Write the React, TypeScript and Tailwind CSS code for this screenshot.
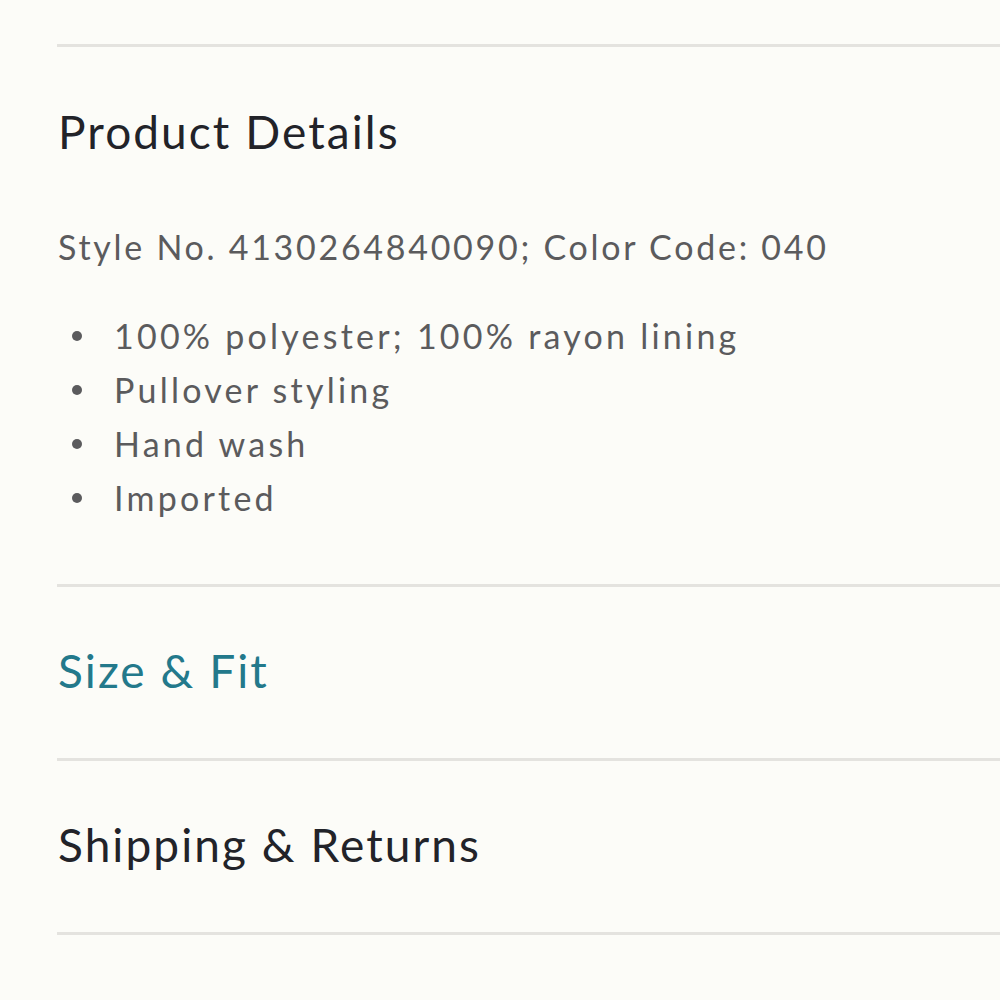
const bullets = [
  "100% polyester; 100% rayon lining",
  "Pullover styling",
  "Hand wash",
  "Imported",
];

function SectionTitle({ label, active }: { label: string; active?: boolean }) {
  return (
    <h2
      className={`text-[46px] leading-[50px] tracking-[0.045em] ${
        active ? "text-[#23798b]" : "text-[#222329]"
      }`}
    >
      {label}
    </h2>
  );
}

export default function App() {
  return (
    <div
      className="min-h-[1000px] w-full bg-[#fcfcf8] pt-[44px] pl-[57px]"
      style={{ fontFamily: "Lato, 'Noto Sans', sans-serif" }}
    >
      <div className="border-t-[3px] border-[#e4e3df] pt-[60px] pb-[59px] pl-px">
        <SectionTitle label="Product Details" />
        <p className="mt-[63px] text-[34px] leading-[54px] tracking-[0.08em] text-[#5b5b5d]">
          Style No. 4130264840090; Color Code: 040
        </p>
        <ul className="mt-[35px]">
          {bullets.map((b) => (
            <li key={b} className="flex items-center text-[34px] leading-[54px] tracking-[0.095em] text-[#5b5b5d]">
              <span className="mr-[32px] ml-[14px] h-[10px] w-[10px] shrink-0 rounded-full bg-[#5b5b5d]" />
              {b}
            </li>
          ))}
        </ul>
      </div>
      <div className="border-t-[3px] border-[#e4e3df] pt-[59px] pb-[62px] pl-px">
        <SectionTitle label="Size & Fit" active />
      </div>
      <div className="border-t-[3px] border-[#e4e3df] pt-[59px] pb-[62px] pl-px">
        <SectionTitle label="Shipping & Returns" />
      </div>
      <div className="border-t-[3px] border-[#e4e3df]" />
    </div>
  );
}
